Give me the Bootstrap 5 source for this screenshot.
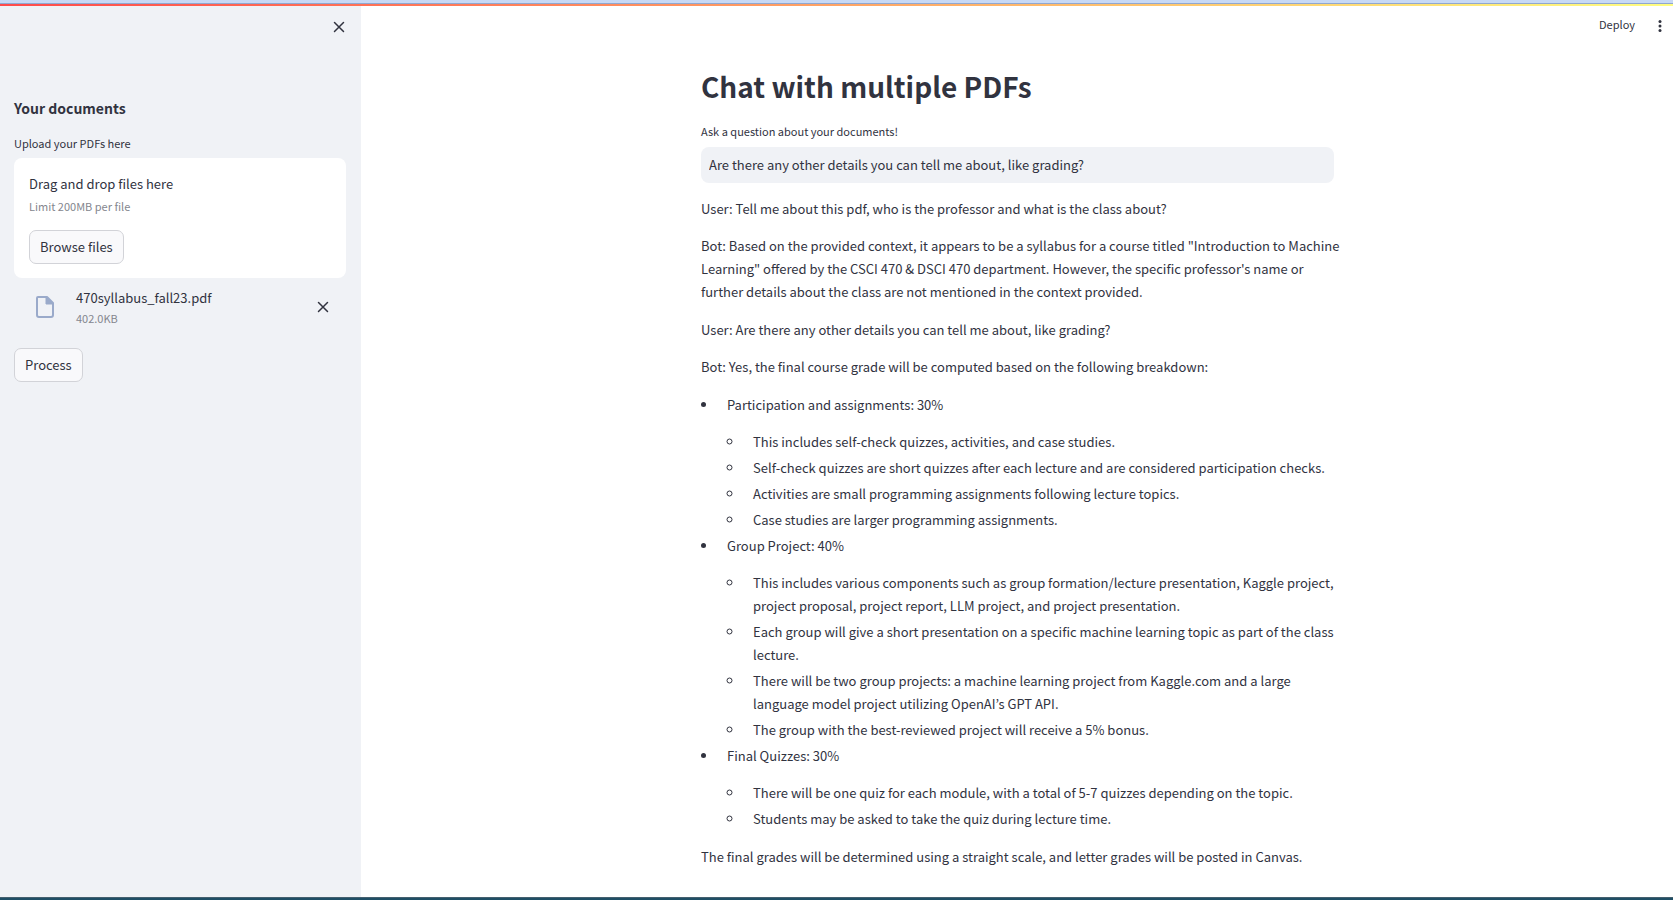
<!DOCTYPE html>
<html lang="en">
<head>
<meta charset="utf-8">
<meta name="viewport" content="width=device-width, initial-scale=1">
<title>Chat with multiple PDFs</title>
<link href="https://cdn.jsdelivr.net/npm/bootstrap@5.3.0/dist/css/bootstrap.min.css" rel="stylesheet">
<style>
  :root { --ink: #31333f; --panel: #f0f2f6; --muted: #84868e; }
  body { font-family: "Noto Sans CJK KR", "Source Sans Pro", sans-serif; font-size: 13px; line-height: 23px; color: var(--ink); }
  .edge-top { height: 4px; background: #c8d9f5; border-bottom: 1px solid #90a7d0; }
  .rainbow { height: 2px; background: linear-gradient(90deg, #ff4b4b, #fffd80); }
  .edge-bottom { height: 3px; background: #1f4e65; border-top: 1px solid #45606f; }
  .side-panel { flex: 0 0 361px; background: var(--panel); padding: 0 15px 0 14px; }
  .side-top { height: 91px; padding-top: 12px; }
  .side-title { font-size: 14px; line-height: 22px; font-weight: 700; margin-bottom: 14px; }
  .field-label { font-size: 11px; line-height: 20px; margin-bottom: 5px; }
  .hint { font-size: 11px; line-height: 18px; color: var(--muted); }
  .drop-zone { border-radius: 8px; padding: 14px 15px; }
  .drop-zone .hint { margin: 2px 0 15px; }
  .btn-plain { --bs-btn-font-size: 13px; --bs-btn-line-height: 22px; --bs-btn-padding-x: 10px; --bs-btn-padding-y: 5px;
    --bs-btn-color: var(--ink); --bs-btn-bg: #f9f9fb; --bs-btn-border-color: #d2d3d8; --bs-btn-border-radius: 7px;
    --bs-btn-hover-color: #ff4b4b; --bs-btn-hover-border-color: #ff4b4b; }
  .btn-bare { color: var(--ink); line-height: 0; }
  .file-row { padding: 8px 16px 0 20px; gap: 20px; margin-bottom: 21px; }
  .main-pane { min-width: 0; padding-left: 1px; }
  .toolbar { height: 38px; padding: 8px 8px 0 0; gap: 20px; }
  .content { width: 100%; max-width: 633px; padding-top: 18px; }
  .page-title { font-size: 28px; line-height: 48px; font-weight: 700; margin-bottom: 11px; }
  .page-title + .field-label { margin-bottom: 6px; }
  .ask { font-size: 13px; line-height: 24px; padding: 6px 8px; border: 0; border-radius: 8px; background: var(--panel); color: var(--ink); margin-bottom: 14px; }
  .ask:focus { background: var(--panel); box-shadow: 0 0 0 1px #ff4b4b; }
  .transcript { margin-right: -6px; }
  .exchange { margin-bottom: 15px; }
  .exchange p { margin: 0 0 14px; }
  .exchange > p:last-child { margin: 0; }
  .exchange > ul { margin: 15px 0; }
  .transcript ul { padding: 0; }
  .transcript li { margin: 0 0 3px 17px; padding-left: 9px; }
  .transcript li ul { margin: 0; }
</style>
</head>
<body class="d-flex flex-column min-vh-100 bg-white">
<div class="edge-top"></div>
<div class="rainbow"></div>
<div class="d-flex flex-grow-1">
  <aside class="side-panel">
    <div class="side-top d-flex justify-content-end align-items-start">
      <button type="button" class="btn-bare bg-transparent border-0 p-0" aria-label="Close sidebar">
        <svg width="16" height="18" viewBox="0 0 16 18" fill="none" stroke="currentColor" stroke-width="1.5" stroke-linecap="round"><path d="M4.500 4.500l9 9M13.500 4.500l-9 9"/></svg>
      </button>
    </div>
    <h2 class="side-title">Your documents</h2>
    <label class="field-label d-block" for="browse">Upload your PDFs here</label>
    <section class="drop-zone bg-white">
      <div>Drag and drop files here</div>
      <div class="hint">Limit 200MB per file</div>
      <button type="button" id="browse" class="btn btn-plain d-block">Browse files</button>
    </section>
    <div class="file-row d-flex align-items-center">
      <svg width="22" height="26" viewBox="0 0 22 26" fill="none" stroke="#9aaaca" stroke-width="2" stroke-linejoin="round"><path d="M4 3h9l6 6v12a2 2 0 0 1-2 2H5a2 2 0 0 1-2-2V4a1 1 0 0 1 1-1z"/><path d="M12 3v7h7z" fill="#9aaaca" stroke-width="1"/></svg>
      <div class="flex-grow-1">
        <div>470syllabus_fall23.pdf</div>
        <div class="hint">402.0KB</div>
      </div>
      <button type="button" class="btn-bare bg-transparent border-0 p-0" aria-label="Remove file">
        <svg width="16" height="18" viewBox="0 0 16 18" fill="none" stroke="currentColor" stroke-width="1.5" stroke-linecap="round"><path d="M4.500 4.500l9 9M13.500 4.500l-9 9"/></svg>
      </button>
    </div>
    <button type="button" class="btn btn-plain d-block">Process</button>
  </aside>

  <main class="main-pane flex-grow-1 d-flex flex-column">
    <div class="toolbar d-flex justify-content-end align-items-start">
      <a href="#" class="field-label text-reset text-decoration-none">Deploy</a>
      <button type="button" class="btn-bare bg-transparent border-0 p-0" aria-label="Menu">
        <svg width="10" height="20" viewBox="0 0 10 20" fill="currentColor"><circle cx="5" cy="7.500" r="1.500"/><circle cx="5" cy="12" r="1.500"/><circle cx="5" cy="16.500" r="1.500"/></svg>
      </button>
    </div>
    <div class="content mx-auto">
      <h1 class="page-title">Chat with multiple PDFs</h1>
      <label class="field-label d-block" for="question">Ask a question about your documents!</label>
      <input type="text" id="question" class="form-control ask" value="Are there any other details you can tell me about, like grading?">
      <div class="transcript">
        <div class="exchange">
          <p>User: Tell me about this pdf, who is the professor and what is the class about?</p>
          <p>Bot: Based on the provided context, it appears to be a syllabus for a course titled "Introduction to Machine Learning" offered by the CSCI 470 &amp; DSCI 470 department. However, the specific professor's name or further details about the class are not mentioned in the context provided.</p>
        </div>
        <div class="exchange">
          <p>User: Are there any other details you can tell me about, like grading?</p>
          <p>Bot: Yes, the final course grade will be computed based on the following breakdown:</p>
          <ul>
            <li><p>Participation and assignments: 30%</p>
              <ul>
                <li>This includes self-check quizzes, activities, and case studies.</li>
                <li>Self-check quizzes are short quizzes after each lecture and are considered participation checks.</li>
                <li>Activities are small programming assignments following lecture topics.</li>
                <li>Case studies are larger programming assignments.</li>
              </ul>
            </li>
            <li><p>Group Project: 40%</p>
              <ul>
                <li>This includes various components such as group formation/lecture presentation, Kaggle project, project proposal, project report, LLM project, and project presentation.</li>
                <li>Each group will give a short presentation on a specific machine learning topic as part of the class lecture.</li>
                <li>There will be two group projects: a machine learning project from Kaggle.com and a large language model project utilizing OpenAI’s GPT API.</li>
                <li>The group with the best-reviewed project will receive a 5% bonus.</li>
              </ul>
            </li>
            <li><p>Final Quizzes: 30%</p>
              <ul>
                <li>There will be one quiz for each module, with a total of 5-7 quizzes depending on the topic.</li>
                <li>Students may be asked to take the quiz during lecture time.</li>
              </ul>
            </li>
          </ul>
          <p>The final grades will be determined using a straight scale, and letter grades will be posted in Canvas.</p>
        </div>
      </div>
    </div>
  </main>
</div>
<div class="edge-bottom"></div>
<script src="https://cdn.jsdelivr.net/npm/bootstrap@5.3.0/dist/js/bootstrap.bundle.min.js"></script>
</body>
</html>
